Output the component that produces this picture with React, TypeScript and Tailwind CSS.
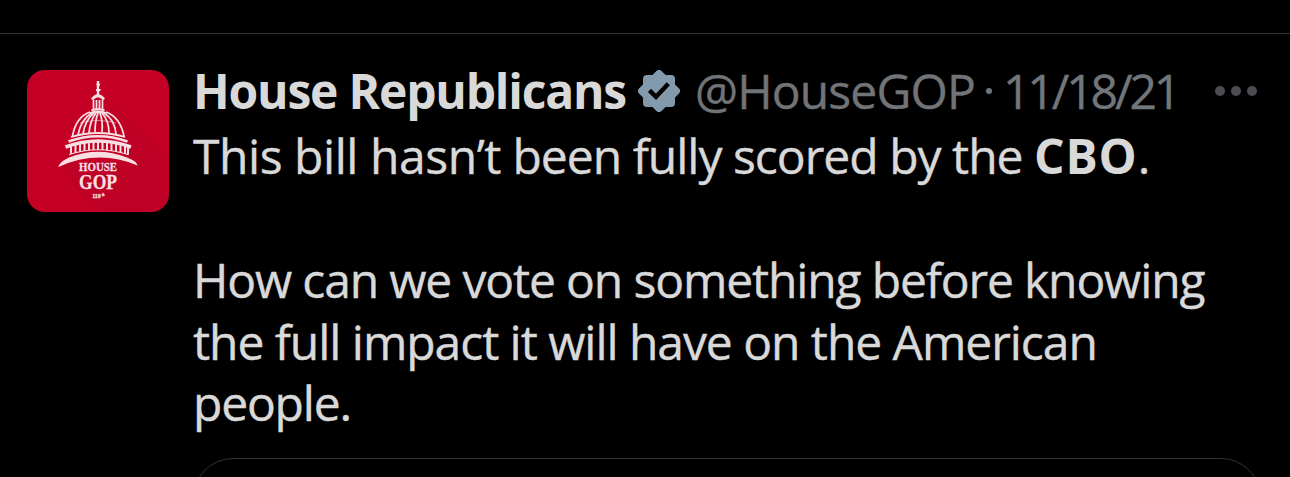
// Single post in a dark timeline: avatar, author line, text and the top of an attached card.

const DOME_RIBS = [
  'M63 42 Q49 47 45.500 66',
  'M65 43 Q54 49 51 65',
  'M67 43 Q58 50 56 64',
  'M69 43 Q63 51 62 63',
  'M71 43 Q68 51 68 62',
  'M73 43 Q76 51 75 62',
  'M75 43 Q82 51 82 63',
  'M77 43 Q88 50 89 64',
  'M79 42 Q93 47 97 66',
];

const COLUMNS = [44, 48.5, 53, 57.5, 62, 66.5, 71, 75.5, 80, 84.5, 89, 93.5, 98, 101];

function Avatar() {
  return (
    <svg viewBox="0 0 142 142" className="size-[142px] shrink-0 rounded-[18px] bg-[#c40124]">
      <path d="M78 28 L142 88 V142 H72 L48 116 L36 92 H100 Z" fill="#b80225" opacity="0.5" />

      <g fill="none" stroke="#f9dfe3">
        <path d="M71 11 V26" strokeWidth="2.4" />
        <path d="M69.500 14.500 H73 M69 20 H73.500" strokeWidth="1.8" />
        <path d="M65 29.500 Q71 22 77 29.500" strokeWidth="2.8" />
        <path d="M66.500 30 V39 M69.500 30 V39 M72.500 30 V39 M75.500 30 V39" strokeWidth="1.7" />
        <path d="M64.500 40.500 Q71 38 77.500 40.500" strokeWidth="2" />
        <path d="M62.500 43.500 Q71 40 79.500 43.500" strokeWidth="2.4" />
        {DOME_RIBS.map((d) => <path key={d} d={d} strokeWidth="1.8" />)}
        <path d="M53 53 Q71 48 89 53" strokeWidth="0.8" opacity="0.7" />
        <path d="M44 67 Q71 59 98 67" strokeWidth="1.8" />
        <path d="M41.500 71.500 Q71 61 100.500 71.500" strokeWidth="2.4" />
        <path d="M38.500 77 Q71 65 104 77" strokeWidth="3.600" />
        {COLUMNS.map((x) => {
          const y = 72 + ((x - 71) * (x - 71)) / 190;
          return <path key={x} d={`M${x} ${y} V${y + 8}`} strokeWidth="2" />;
        })}
        <path d="M42 84.500 Q71 75 101 84.500" strokeWidth="1.200" />
      </g>
      <path d="M31.500 97 C32 93 37 90 42 87.500 Q71 76 100 87.500 C106 90 110 92 110.500 95.500 Q71 79 31.500 97 Z" fill="#f9dfe3" />

      <g fill="#f9dfe3" stroke="#f9dfe3" strokeWidth="0.3" fontFamily="'Liberation Serif', serif" textAnchor="middle">
        <text x="71" y="101" fontSize="12" fontWeight="700" textLength="38" lengthAdjust="spacingAndGlyphs">HOUSE</text>
        <text x="71" y="119" fontSize="22" fontWeight="700" textLength="38" lengthAdjust="spacingAndGlyphs">GOP</text>
        <text x="69.500" y="128" fontSize="6" fontWeight="700">119</text>
        <text x="76" y="126" fontSize="3" fontWeight="700">th</text>
      </g>
    </svg>
  );
}

function VerifiedBadge() {
  return (
    <svg viewBox="-21 -21 42 42" className="size-[42px] shrink-0">
      <g fill="#829aab">
        <rect x="-16" y="-16" width="32" height="32" rx="4" />
        <rect x="-16" y="-16" width="32" height="32" rx="4" transform="rotate(45)" />
      </g>
      <path d="M-9.500 -0.600 L-3 5.800 L9.300 -7.200" fill="none" stroke="#000" strokeWidth="4.400" />
    </svg>
  );
}

export default function App() {
  return (
    <div className="h-[477px] w-full overflow-hidden bg-black pt-[33px] font-['Open_Sans','Noto_Sans',sans-serif] text-[#d9d9d9]">
      <article className="flex h-full items-start border-t border-[#333333] pl-[27px] pt-9">
        <Avatar />

        <div className="ml-[24px] flex w-[1068px] shrink-0 flex-col">
          <header className="-mt-[12px] flex h-[65px] items-center whitespace-nowrap text-[48px]">
            <span className="w-[445px] font-bold tracking-[-1.2px]">House Republicans</span>
            <VerifiedBadge />
            <span className="ml-[15px] w-[291px] tracking-[-0.85px] text-[#717377] [-webkit-text-stroke:0.4px]">@HouseGOP</span>
            <span className="size-[6px] rounded-full bg-[#6b7680]" />
            <span className="ml-[11px] w-[212px] tracking-[-3.1px] text-[#71767b] [-webkit-text-stroke:0.4px]">11/18/21</span>
            <span className="flex gap-[6px]">
              <span className="size-[10px] rounded-full bg-[#4b4d50]" />
              <span className="size-[10px] rounded-full bg-[#4b4d50]" />
              <span className="size-[10px] rounded-full bg-[#4b4d50]" />
            </span>
          </header>

          <div className="mt-[2px] whitespace-nowrap text-[48px] leading-[61.7px] [-webkit-text-stroke:0.4px]">
            <p className="tracking-[-1px]">
              <span className="tracking-[-0.45px]">This bill hasn’t</span> been fully scored by the{' '}
              <strong className="font-bold tracking-[0.9px] [-webkit-text-stroke:0]">CBO</strong>.
            </p>
            <p className="mt-[62.3px] tracking-[-1.15px]">How can we vote on something before knowing</p>
            <p className="tracking-[-1.05px]">the full impact it will have on the American</p>
            <p className="tracking-[-1.2px]">people.</p>
          </div>

          <div className="mt-[23.400px] h-[200px] rounded-[40px] border border-[#333333]" />
        </div>
      </article>
    </div>
  );
}
